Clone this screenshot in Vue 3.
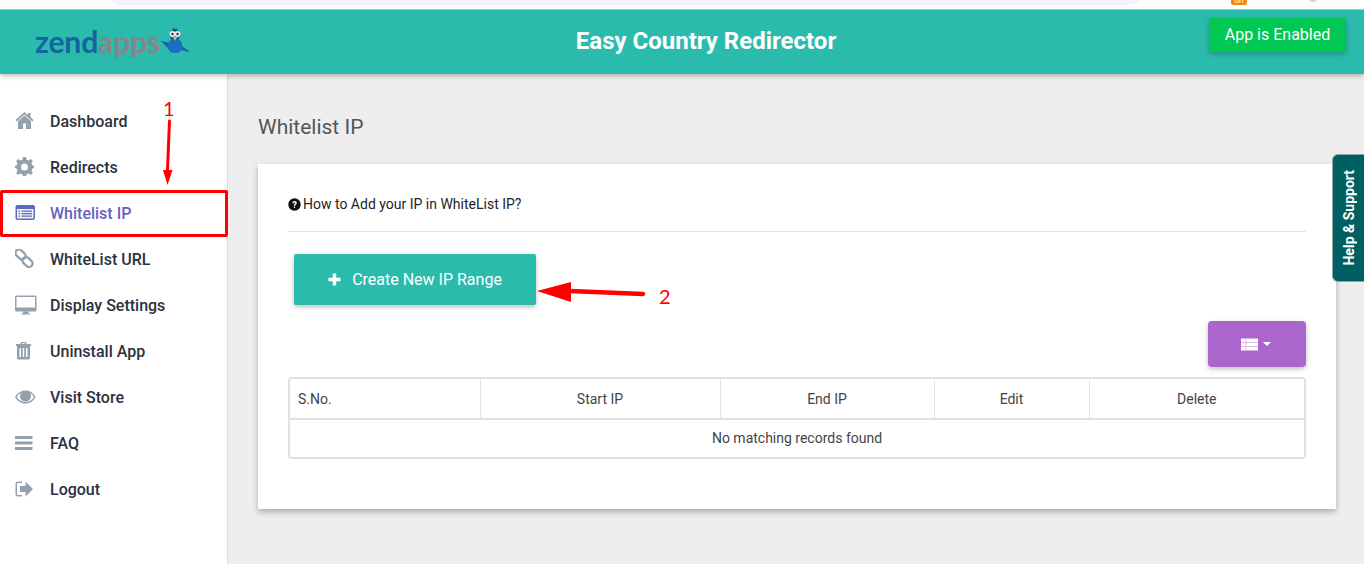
<script setup>
const menu = [
  { label: 'Dashboard', icon: 'home' },
  { label: 'Redirects', icon: 'gear' },
  { label: 'Whitelist IP', icon: 'list', active: true },
  { label: 'WhiteList URL', icon: 'link' },
  { label: 'Display Settings', icon: 'desktop' },
  { label: 'Uninstall App', icon: 'trash' },
  { label: 'Visit Store', icon: 'eye' },
  { label: 'FAQ', icon: 'bars' },
  { label: 'Logout', icon: 'logout' }
]
</script>

<template>
  <div class="page">
    <div class="browser-strip">
      <div class="address"></div>
      <div class="ext-badge">on</div>
      <div class="profile-dot"></div>
    </div>
    <header class="topbar">
      <div class="logo">
        <span class="logo-text"><span class="zend">zend</span><span class="apps">apps</span></span>
        <svg class="bird" width="30" height="30" viewBox="0 0 30 30">
          <path d="M1 15 L10 17 L13 23 L8 22 Z" fill="#1560a8" />
          <path d="M20 19 L29 25 L28 26 L19 23 Z" fill="#1560a8" />
          <ellipse cx="15" cy="20" rx="7.5" ry="7.5" fill="#1a6fc0" />
          <ellipse cx="15" cy="9" rx="5.5" ry="6" fill="#1a66b0" />
          <path d="M13 1 L15 4 L17 1.5 L16 5 L13 5 Z" fill="#123f7a" />
          <circle cx="12.5" cy="8" r="3" fill="#e8ecef" />
          <circle cx="17.5" cy="8" r="3" fill="#e8ecef" />
          <circle cx="12.5" cy="8" r="1.2" fill="#333" />
          <circle cx="17.5" cy="8" r="1.2" fill="#333" />
          <path d="M13 11 H17 L15 15 Z" fill="#e6c022" />
          <path d="M13 27 H17 V28 H13 Z" fill="#b89a2a" />
        </svg>
      </div>
      <h1 class="app-title">Easy Country Redirector</h1>
      <div class="status">App is Enabled</div>
    </header>

    <div class="body">
      <aside class="sidebar">
        <a v-for="item in menu" :key="item.label" class="menu-item" :class="{ active: item.active }">
          <svg class="menu-icon" width="24" height="20" viewBox="0 0 24 20">
            <path v-if="item.icon === 'home'" d="M9.5 1 L0.5 9 L1.7 10.4 L9.5 3.6 L17.3 10.4 L18.5 9 L15.5 6.3 V2 H13 V4.1 Z M3 10.2 V18 H8 V12.5 H11 V18 H16 V10.2 L9.5 4.6 Z" fill="#93a1ae" />
            <g v-else-if="item.icon === 'gear'" fill="#93a1ae">
              <path fill-rule="evenodd" d="M8 1 H11 L11.5 3.5 L13.6 4.4 L15.8 3 L17.9 5.1 L16.5 7.3 L17.4 9.4 L19 10 V12 L17.4 12.6 L16.5 14.7 L17.9 16.9 L15.8 19 L13.6 17.6 L11.5 18.5 L11 20 H8 L7.5 18.5 L5.4 17.6 L3.2 19 L1.1 16.9 L2.5 14.7 L1.6 12.6 L0 12 V10 L1.6 9.4 L2.5 7.3 L1.1 5.1 L3.2 3 L5.4 4.4 L7.5 3.5 Z M9.5 7.5 A3.5 3.5 0 1 0 9.5 14.5 A3.5 3.5 0 1 0 9.5 7.5 Z" transform="translate(0 -1)" />
            </g>
            <g v-else-if="item.icon === 'list'">
              <rect x="0.5" y="2" width="19.5" height="15" rx="2" fill="#5c6bc0" />
              <rect x="2" y="6" width="16.5" height="9.5" fill="#eef0fa" />
              <path d="M3.5 7.5 H5 V8.7 H3.5 Z M6.5 7.5 H17 V8.7 H6.5 Z M3.5 10 H5 V11.2 H3.5 Z M6.5 10 H17 V11.2 H6.5 Z M3.5 12.5 H5 V13.7 H3.5 Z M6.5 12.5 H17 V13.7 H6.5 Z" fill="#5c6bc0" />
            </g>
            <g v-else-if="item.icon === 'link'" fill="none" stroke="#93a1ae" stroke-width="2.3">
              <rect x="-0.2" y="2" width="11.4" height="7" rx="3.5" transform="rotate(42 5.5 5.5)" />
              <rect x="6.8" y="9.5" width="11.4" height="7" rx="3.5" transform="rotate(42 12.5 13)" />
            </g>
            <g v-else-if="item.icon === 'desktop'" fill="#93a1ae">
              <path fill-rule="evenodd" d="M1.5 0.5 H20 A1.5 1.5 0 0 1 21.5 2 V15 A1.5 1.5 0 0 1 20 16.5 H1.5 A1.5 1.5 0 0 1 0 15 V2 A1.5 1.5 0 0 1 1.5 0.5 Z M1.5 2 V12.5 H20 V2 Z" />
              <path d="M8 16.5 H13.5 V18.5 H15 V19.5 H6.5 V18.5 H8 Z" />
            </g>
            <g v-else-if="item.icon === 'trash'" fill="#93a1ae">
              <path fill-rule="evenodd" d="M5 3 L6.5 1 H10.5 L12 3 H16 V5 H15 V17 A1.5 1.5 0 0 1 13.5 18.5 H3.5 A1.5 1.5 0 0 1 2 17 V5 H1 V3 Z M7 3 H10 L9.5 2 H7.5 Z M4.5 7 V16 H6 V7 Z M7.8 7 V16 H9.2 V7 Z M11 7 V16 H12.5 V7 Z" />
            </g>
            <g v-else-if="item.icon === 'eye'" fill="#93a1ae">
              <path fill-rule="evenodd" d="M0 10 C3 5 7 3.5 10.5 3.5 C14 3.5 18 5 20.5 10 C18 15 14 16.5 10.5 16.5 C7 16.5 3 15 0 10 Z M1.8 10 C4 13.5 7 15 10.5 15 C14 15 17 13.5 19 10 C17.8 8 16.5 6.8 15 6 C15.6 7 16 8 16 9.2 C16 12.2 13.5 14.5 10.5 14.5 C7.5 14.5 5 12.2 5 9.2 C5 8 5.4 7 6 6 C4.3 6.8 3 8 1.8 10 Z" />
            </g>
            <g v-else-if="item.icon === 'bars'" fill="#93a1ae">
              <rect x="0" y="3" width="17.5" height="3" />
              <rect x="0" y="8.5" width="17.5" height="3" />
              <rect x="0" y="14" width="17.5" height="3" />
            </g>
            <g v-else-if="item.icon === 'logout'" fill="#93a1ae">
              <path d="M7 2.5 H3 A2.5 2.5 0 0 0 0.5 5 V15 A2.5 2.5 0 0 0 3 17.5 H7 V16 H3.2 A1.2 1.2 0 0 1 2 14.8 V5.2 A1.2 1.2 0 0 1 3.2 4 H7 Z" />
              <path d="M5 7 H10.5 V2.5 L18 10 L10.5 17.5 V13 H5 Z" />
            </g>
          </svg>
          <span>{{ item.label }}</span>
        </a>
      </aside>

      <main class="content">
        <h2 class="page-title">Whitelist IP</h2>
        <section class="card">
          <p class="howto">
            <svg width="13" height="13" viewBox="0 0 13 13">
              <circle cx="6.5" cy="6.5" r="6.2" fill="#111" />
              <path d="M4.4 5.1 C4.5 3.8 5.4 3.1 6.6 3.1 C7.9 3.1 8.8 3.9 8.8 5 C8.8 6.5 7.2 6.4 7.2 7.7 H5.8 C5.8 5.9 7.3 6 7.3 5.1 C7.3 4.7 7 4.4 6.5 4.4 C6.1 4.4 5.8 4.7 5.7 5.2 Z M5.8 8.4 H7.2 V9.8 H5.8 Z" fill="#fff" />
            </svg>
            How to Add your IP in WhiteList IP?
          </p>
          <button class="create-btn">
            <svg width="13" height="13" viewBox="0 0 13 13"><path d="M4.8 0.5 H8.2 V4.8 H12.5 V8.2 H8.2 V12.5 H4.8 V8.2 H0.5 V4.8 H4.8 Z" fill="#fff" /></svg>
            Create New IP Range
          </button>
          <div class="toolbar">
            <button class="columns-btn">
              <svg width="17" height="13" viewBox="0 0 17 13"><path d="M0 0.5 H17 V12.5 H0 Z" fill="#fff" /><path d="M5 0.5 V12.5 M0 4.5 H17 M0 8.5 H17" stroke="#d9bdea" stroke-width="1" /></svg>
              <span class="caret"></span>
            </button>
          </div>
          <div class="table-wrap">
            <table>
              <thead>
                <tr>
                  <th class="col-sno">S.No.</th>
                  <th class="col-start">Start IP</th>
                  <th class="col-end">End IP</th>
                  <th class="col-edit">Edit</th>
                  <th>Delete</th>
                </tr>
              </thead>
              <tbody>
                <tr><td colspan="5">No matching records found</td></tr>
              </tbody>
            </table>
          </div>
        </section>
      </main>
    </div>

    <div class="help-tab"><span>Help &amp; Support</span></div>

    <!-- red annotations drawn over the screenshot -->
    <div class="active-box"></div>
    <span class="note note-1">1</span>
    <span class="note note-2">2</span>
    <svg class="arrows" width="1364" height="564" viewBox="0 0 1364 564">
      <path d="M169.5 121 L167.5 170" stroke="#f00" stroke-width="3" stroke-linecap="round" />
      <path d="M163 170 L172.5 170 L167.5 185 Z" fill="#f00" />
      <path d="M570 291 L643 294" stroke="#f00" stroke-width="4.5" stroke-linecap="round" />
      <path d="M537 291 L571 282 L571 302 Z" fill="#f00" />
    </svg>
  </div>
</template>

<style>
html,
body {
  margin: 0;
  overflow: hidden;
}
</style>

<style scoped>
.page {
  position: relative;
  width: 1364px;
  height: 564px;
  overflow: hidden;
  background: #eee;
  font-family: Roboto, "Liberation Sans", sans-serif;
  color: #212529;
}

.browser-strip {
  position: relative;
  height: 9px;
  background: #fff;
  border-bottom: 1px solid #c8c8c8;
  box-sizing: content-box;
  overflow: hidden;
}

.address {
  position: absolute;
  left: 110px;
  top: -29px;
  width: 1031px;
  height: 34px;
  border-radius: 10px;
  background: #f1f3f4;
}

.ext-badge {
  position: absolute;
  left: 1231px;
  top: -3px;
  width: 16px;
  height: 8px;
  border-radius: 2px;
  background: #f5870f;
  color: #fff;
  font-size: 8px;
  line-height: 8px;
  text-align: center;
}

.profile-dot {
  position: absolute;
  left: 1309px;
  top: -6px;
  width: 8px;
  height: 8px;
  border-radius: 50%;
  background: #d0d0d0;
}

.topbar {
  position: relative;
  z-index: 2;
  height: 64px;
  background: #2bbbad;
  box-shadow: 0 2px 5px rgba(0, 0, 0, 0.26);
  display: flex;
  align-items: flex-start;
}

.logo {
  width: 228px;
  flex: none;
  box-sizing: border-box;
  padding: 13px 0 0 35px;
  display: flex;
  align-items: flex-start;
}

.logo-text {
  font-family: Lato, "Open Sans", sans-serif;
  font-size: 30.2px;
  line-height: 36px;
  font-weight: 700;
  letter-spacing: -0.2px;
}

.zend {
  color: #14659d;
}

.apps {
  color: #888487;
}

.bird {
  margin: 3px 0 0 0;
}

.app-title {
  flex: 1;
  margin: 0;
  padding: 16px 180px 0 0;
  text-align: center;
  color: #fff;
  font-size: 24px;
  line-height: 30px;
  font-weight: 700;
}

.status {
  position: absolute;
  top: 8px;
  left: 1209px;
  width: 137px;
  height: 34px;
  line-height: 33px;
  text-align: center;
  background: #00c853;
  color: #fff;
  font-size: 16px;
  border-radius: 2px;
  box-shadow: 0 2px 5px rgba(0, 0, 0, 0.26);
}

.body {
  display: flex;
  height: 490px;
}

.sidebar {
  width: 228px;
  flex: none;
  box-sizing: border-box;
  background: #fff;
  border-right: 1px solid #ddd;
  padding-top: 24px;
}

.menu-item {
  display: flex;
  align-items: center;
  height: 46px;
  padding-left: 15px;
  font-size: 16px;
  font-weight: 500;
  color: #2a3142;
}

.menu-item.active {
  color: #6a5fc0;
}

.menu-icon {
  flex: none;
  margin-right: 11px;
}

.content {
  flex: 1;
  padding: 0 28px 0 30px;
  min-width: 0;
}

.page-title {
  margin: 0;
  padding-top: 40px;
  height: 50px;
  font-size: 21px;
  line-height: 26px;
  font-weight: 400;
  color: #555;
}

.card {
  box-sizing: border-box;
  height: 345px;
  background: #fff;
  padding: 30px 30px 0;
  box-shadow: 0 3px 6px rgba(0, 0, 0, 0.28);
}

.howto {
  margin: 0;
  height: 37px;
  font-size: 14px;
  line-height: 20px;
  color: #212529;
  border-bottom: 1px solid #e4e4e4;
  display: flex;
  align-items: flex-start;
  gap: 2px;
}

.howto svg {
  margin-top: 4px;
}

.create-btn {
  display: flex;
  align-items: center;
  justify-content: center;
  gap: 11px;
  width: 242px;
  height: 51px;
  margin: 22px 0 0 6px;
  padding: 0;
  border: 0;
  border-radius: 2px;
  background: #2bbbad;
  color: #fff;
  font-family: inherit;
  font-size: 16px;
  box-shadow: 0 2px 5px rgba(0, 0, 0, 0.26);
}

.toolbar {
  display: flex;
  justify-content: flex-end;
  margin-top: 16px;
}

.columns-btn {
  display: flex;
  align-items: center;
  justify-content: center;
  gap: 5px;
  width: 98px;
  height: 46px;
  padding: 0 2px 0 0;
  border: 0;
  border-radius: 4px;
  background: #aa66cc;
  box-shadow: 0 2px 5px rgba(0, 0, 0, 0.26);
}

.caret {
  width: 0;
  height: 0;
  border-left: 4px solid transparent;
  border-right: 4px solid transparent;
  border-top: 4px solid #fff;
}

.table-wrap {
  margin-top: 10px;
  border: 2px solid #e1e1e1;
  border-radius: 4px;
  overflow: hidden;
}

table {
  width: 100%;
  border-collapse: collapse;
  table-layout: fixed;
  font-size: 14px;
  color: #444;
}

th {
  height: 39px;
  padding: 0;
  font-weight: 400;
  text-align: center;
  border-left: 1px solid #e6e6e6;
  border-bottom: 2px solid #e1e1e1;
}

th:first-child {
  border-left: 0;
}

.col-sno {
  width: 190px;
  text-align: left;
  padding-left: 8px;
  box-sizing: border-box;
}

.col-start {
  width: 239px;
}

.col-end {
  width: 213px;
}

.col-edit {
  width: 154px;
}

td {
  height: 36px;
  padding: 0 0 1px;
  text-align: center;
}

.help-tab {
  position: absolute;
  left: 1332px;
  top: 154px;
  width: 32px;
  height: 128px;
  box-sizing: border-box;
  background: #005f60;
  border: 1px solid #8aa9aa;
  border-right: 0;
  border-radius: 6px 0 0 6px;
  display: flex;
  align-items: center;
  justify-content: center;
}

.help-tab span {
  writing-mode: vertical-rl;
  transform: rotate(180deg);
  color: #fff;
  font-size: 14px;
  font-weight: 700;
  white-space: nowrap;
}

.active-box {
  position: absolute;
  left: 0;
  top: 190px;
  width: 228px;
  height: 47px;
  box-sizing: border-box;
  border: 3px solid #f00;
  border-radius: 2px;
}

.note {
  position: absolute;
  color: #f00;
  font-family: Lato, "Liberation Sans", sans-serif;
  font-size: 20px;
  line-height: 22px;
}

.note-1 {
  left: 163px;
  top: 97px;
}

.note-2 {
  left: 659px;
  top: 285px;
}

.arrows {
  position: absolute;
  left: 0;
  top: 0;
  pointer-events: none;
}
</style>
